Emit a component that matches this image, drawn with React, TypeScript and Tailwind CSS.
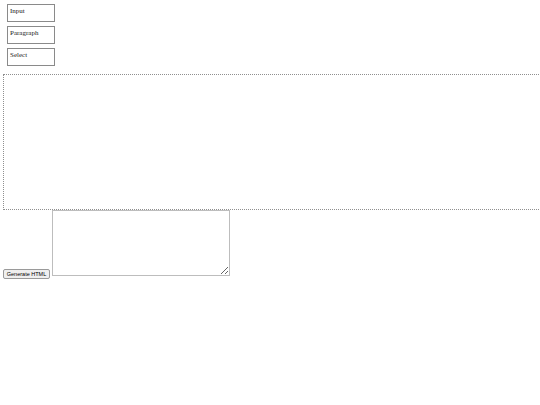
const palette = ["Input", "Paragraph", "Select"];

export default function App() {
  return (
    <div className="w-[540px] h-[405px] overflow-hidden bg-white font-['Liberation_Serif',serif] text-[#222]">
      <div className="flex flex-col gap-[4px] pt-[4px] pl-[7px]">
        {palette.map((label) => (
          <div
            key={label}
            className="w-[48px] h-[18px] border border-[#8a8a8a] pl-[2px] pt-[2px] text-[7px] leading-[9px]"
          >
            {label}
          </div>
        ))}
      </div>

      <div className="ml-[3px] mt-[8px] w-[560px] h-[136px] border border-dotted border-[#8f8f8f]" />

      <div className="flex items-start gap-[2px] pl-[3px]">
        <button className="mt-[59px] h-[10px] w-[47px] rounded-[2px] border border-[#9a9a9a] bg-[#efefef] px-[2px] font-['Liberation_Sans',sans-serif] text-[5.5px] leading-[8px] text-black">
          Generate HTML
        </button>
        <textarea className="w-[178px] h-[66px] border border-[#bdbdbd] resize-y outline-none" />
      </div>
    </div>
  );
}
